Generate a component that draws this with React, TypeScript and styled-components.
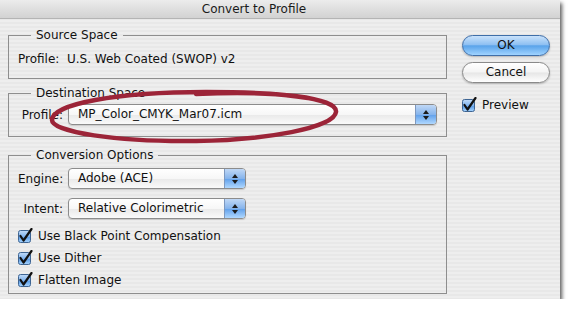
import styled, { createGlobalStyle } from 'styled-components';

const GlobalStyle = createGlobalStyle`
  body {
    margin: 0;
    background: #ffffff;
    font-family: "DejaVu Sans", "Liberation Sans", sans-serif;
  }
`;

const Window = styled.div`
  position: relative;
  width: 560px;
  height: 299px;
  background: repeating-linear-gradient(
    to bottom,
    #eeeeee 0px,
    #eeeeee 2px,
    #e8e8e8 2px,
    #e8e8e8 4px
  );
  box-shadow: 2px 3px 4px rgba(0, 0, 0, 0.65);
`;

const TitleBar = styled.div`
  height: 18px;
  padding-right: 52px;
  background: linear-gradient(to bottom, #ececec, #d2d2d2);
  border-bottom: 1px solid #b4b4b4;
  text-align: center;
  font-size: 12px;
  line-height: 18px;
  color: #1a1a1a;
`;

const Body = styled.div`
  display: flex;
  padding: 9px 0 0 8px;
`;

const LeftColumn = styled.div`
  width: 439px;
  display: flex;
  flex-direction: column;
`;

const Group = styled.fieldset<{ $gap: number; $height: number }>`
  margin: 0 0 ${(p) => p.$gap}px 0;
  height: ${(p) => p.$height}px;
  box-sizing: border-box;
  border: 1px solid #8e8e8e;
  padding: 0 0 0 9px;
  min-width: 0;
`;

const Legend = styled.legend`
  margin-left: 13px;
  padding: 0 5px;
  font-size: 12px;
  line-height: 14px;
  color: #111;
`;

const Text = styled.span`
  font-size: 12px;
  color: #111;
  white-space: pre;
`;

const SourceLine = styled(Text)`
  display: block;
  margin-top: 10px;
`;

const Row = styled.div<{ $top?: number }>`
  display: flex;
  align-items: center;
  margin-top: ${(p) => p.$top ?? 0}px;
`;

const Label = styled(Text)`
  width: 45px;
  margin-right: 5px;
  text-align: right;
`;

const Popup = styled.div<{ $width: number }>`
  width: ${(p) => p.$width}px;
  height: 21px;
  box-sizing: border-box;
  display: flex;
  border: 1px solid #8c8c8c;
  border-radius: 4px;
  background: linear-gradient(to bottom, #ffffff 0%, #f7f7f7 50%, #e9e9e9 51%, #fafafa 100%);
  box-shadow: 0 1px 1px rgba(0, 0, 0, 0.15);
  overflow: hidden;
`;

const PopupValue = styled(Text)`
  flex: 1;
  padding-left: 9px;
  line-height: 19px;
`;

const PopupArrows = styled.div`
  width: 20px;
  display: flex;
  align-items: center;
  justify-content: center;
  border-left: 1px solid #7d98bf;
  background: linear-gradient(to bottom, #c0d8f6 0%, #86b4ec 50%, #5f9fea 51%, #b0d8ff 100%);
`;

const CheckRow = styled.label<{ $top?: number }>`
  display: flex;
  align-items: center;
  height: 22px;
  margin-top: ${(p) => p.$top ?? 0}px;
`;

const CheckText = styled(Text)`
  margin-left: 5px;
`;

const RightColumn = styled.div`
  margin-left: 15px;
  width: 88px;
  display: flex;
  flex-direction: column;
  padding-top: 7px;
`;

const Button = styled.div<{ $primary?: boolean }>`
  height: 21px;
  box-sizing: border-box;
  margin-bottom: 6px;
  border-radius: 11px;
  border: 1px solid ${(p) => (p.$primary ? '#3f6ea8' : '#8a8a8a')};
  background: ${(p) =>
    p.$primary
      ? 'linear-gradient(to bottom, #c9e2fb 0%, #8fc0f2 45%, #5aa3ea 52%, #9fd3ff 100%)'
      : 'linear-gradient(to bottom, #ffffff 0%, #f4f4f4 48%, #e6e6e6 52%, #ffffff 100%)'};
  box-shadow: 0 1px 2px rgba(0, 0, 0, 0.25);
  text-align: center;
  font-size: 12px;
  line-height: 19px;
  color: #111;
`;

const PreviewRow = styled(CheckRow)`
  margin-top: 5px;
`;

const Annotation = styled.svg`
  position: absolute;
  left: 46px;
  top: 86px;
  pointer-events: none;
`;

function Arrows() {
  return (
    <svg width="8" height="12" viewBox="0 0 8 12">
      <path d="M4 1 L7 5 L1 5 Z" fill="#1c1c1c" />
      <path d="M4 11 L7 7 L1 7 Z" fill="#1c1c1c" />
    </svg>
  );
}

function Checkbox() {
  return (
    <svg width="15" height="16" viewBox="0 0 15 16">
      <defs>
        <linearGradient id="cb" x1="0" y1="0" x2="0" y2="1">
          <stop offset="0" stopColor="#c3dcf8" />
          <stop offset="0.5" stopColor="#7fb3ee" />
          <stop offset="0.55" stopColor="#5b9ce6" />
          <stop offset="1" stopColor="#a9d6ff" />
        </linearGradient>
      </defs>
      <rect x="0.5" y="2.5" width="12" height="12" rx="2" fill="url(#cb)" stroke="#3e6593" />
      <path d="M2.5 8 L5.5 12.5 L13.5 1" fill="none" stroke="#111" strokeWidth="2.2" strokeLinecap="round" strokeLinejoin="round" />
    </svg>
  );
}

function Select({ value, width }: { value: string; width: number }) {
  return (
    <Popup $width={width}>
      <PopupValue>{value}</PopupValue>
      <PopupArrows>
        <Arrows />
      </PopupArrows>
    </Popup>
  );
}

export default function App() {
  return (
    <>
      <GlobalStyle />
      <Window>
        <TitleBar>Convert to Profile</TitleBar>
        <Body>
          <LeftColumn>
            <Group $gap={7} $height={51}>
              <Legend>Source Space</Legend>
              <SourceLine>{'Profile:  U.S. Web Coated (SWOP) v2'}</SourceLine>
            </Group>
            <Group $gap={11} $height={51}>
              <Legend>Destination Space</Legend>
              <Row $top={4}>
                <Label>Profile:</Label>
                <Select value="MP_Color_CMYK_Mar07.icm" width={369} />
              </Row>
            </Group>
            <Group $gap={0} $height={146}>
              <Legend>Conversion Options</Legend>
              <Row $top={6}>
                <Label>Engine:</Label>
                <Select value="Adobe (ACE)" width={178} />
              </Row>
              <Row $top={9}>
                <Label>Intent:</Label>
                <Select value="Relative Colorimetric" width={178} />
              </Row>
              <CheckRow $top={6}>
                <Checkbox />
                <CheckText>Use Black Point Compensation</CheckText>
              </CheckRow>
              <CheckRow>
                <Checkbox />
                <CheckText>Use Dither</CheckText>
              </CheckRow>
              <CheckRow>
                <Checkbox />
                <CheckText>Flatten Image</CheckText>
              </CheckRow>
            </Group>
          </LeftColumn>
          <RightColumn>
            <Button $primary>OK</Button>
            <Button>Cancel</Button>
            <PreviewRow>
              <Checkbox />
              <CheckText>Preview</CheckText>
            </PreviewRow>
          </RightColumn>
        </Body>
        <Annotation width="300" height="62" viewBox="0 0 300 62">
          <path
            d="M150 8 C 230 4, 292 12, 290 26 C 288 42, 220 54, 150 55 C 70 56, 6 46, 6 34 C 6 18, 70 6, 160 6 C 200 6, 240 8, 262 12"
            fill="none"
            stroke="#9c2438"
            strokeWidth="4.5"
            strokeLinecap="round"
          />
        </Annotation>
      </Window>
    </>
  );
}
